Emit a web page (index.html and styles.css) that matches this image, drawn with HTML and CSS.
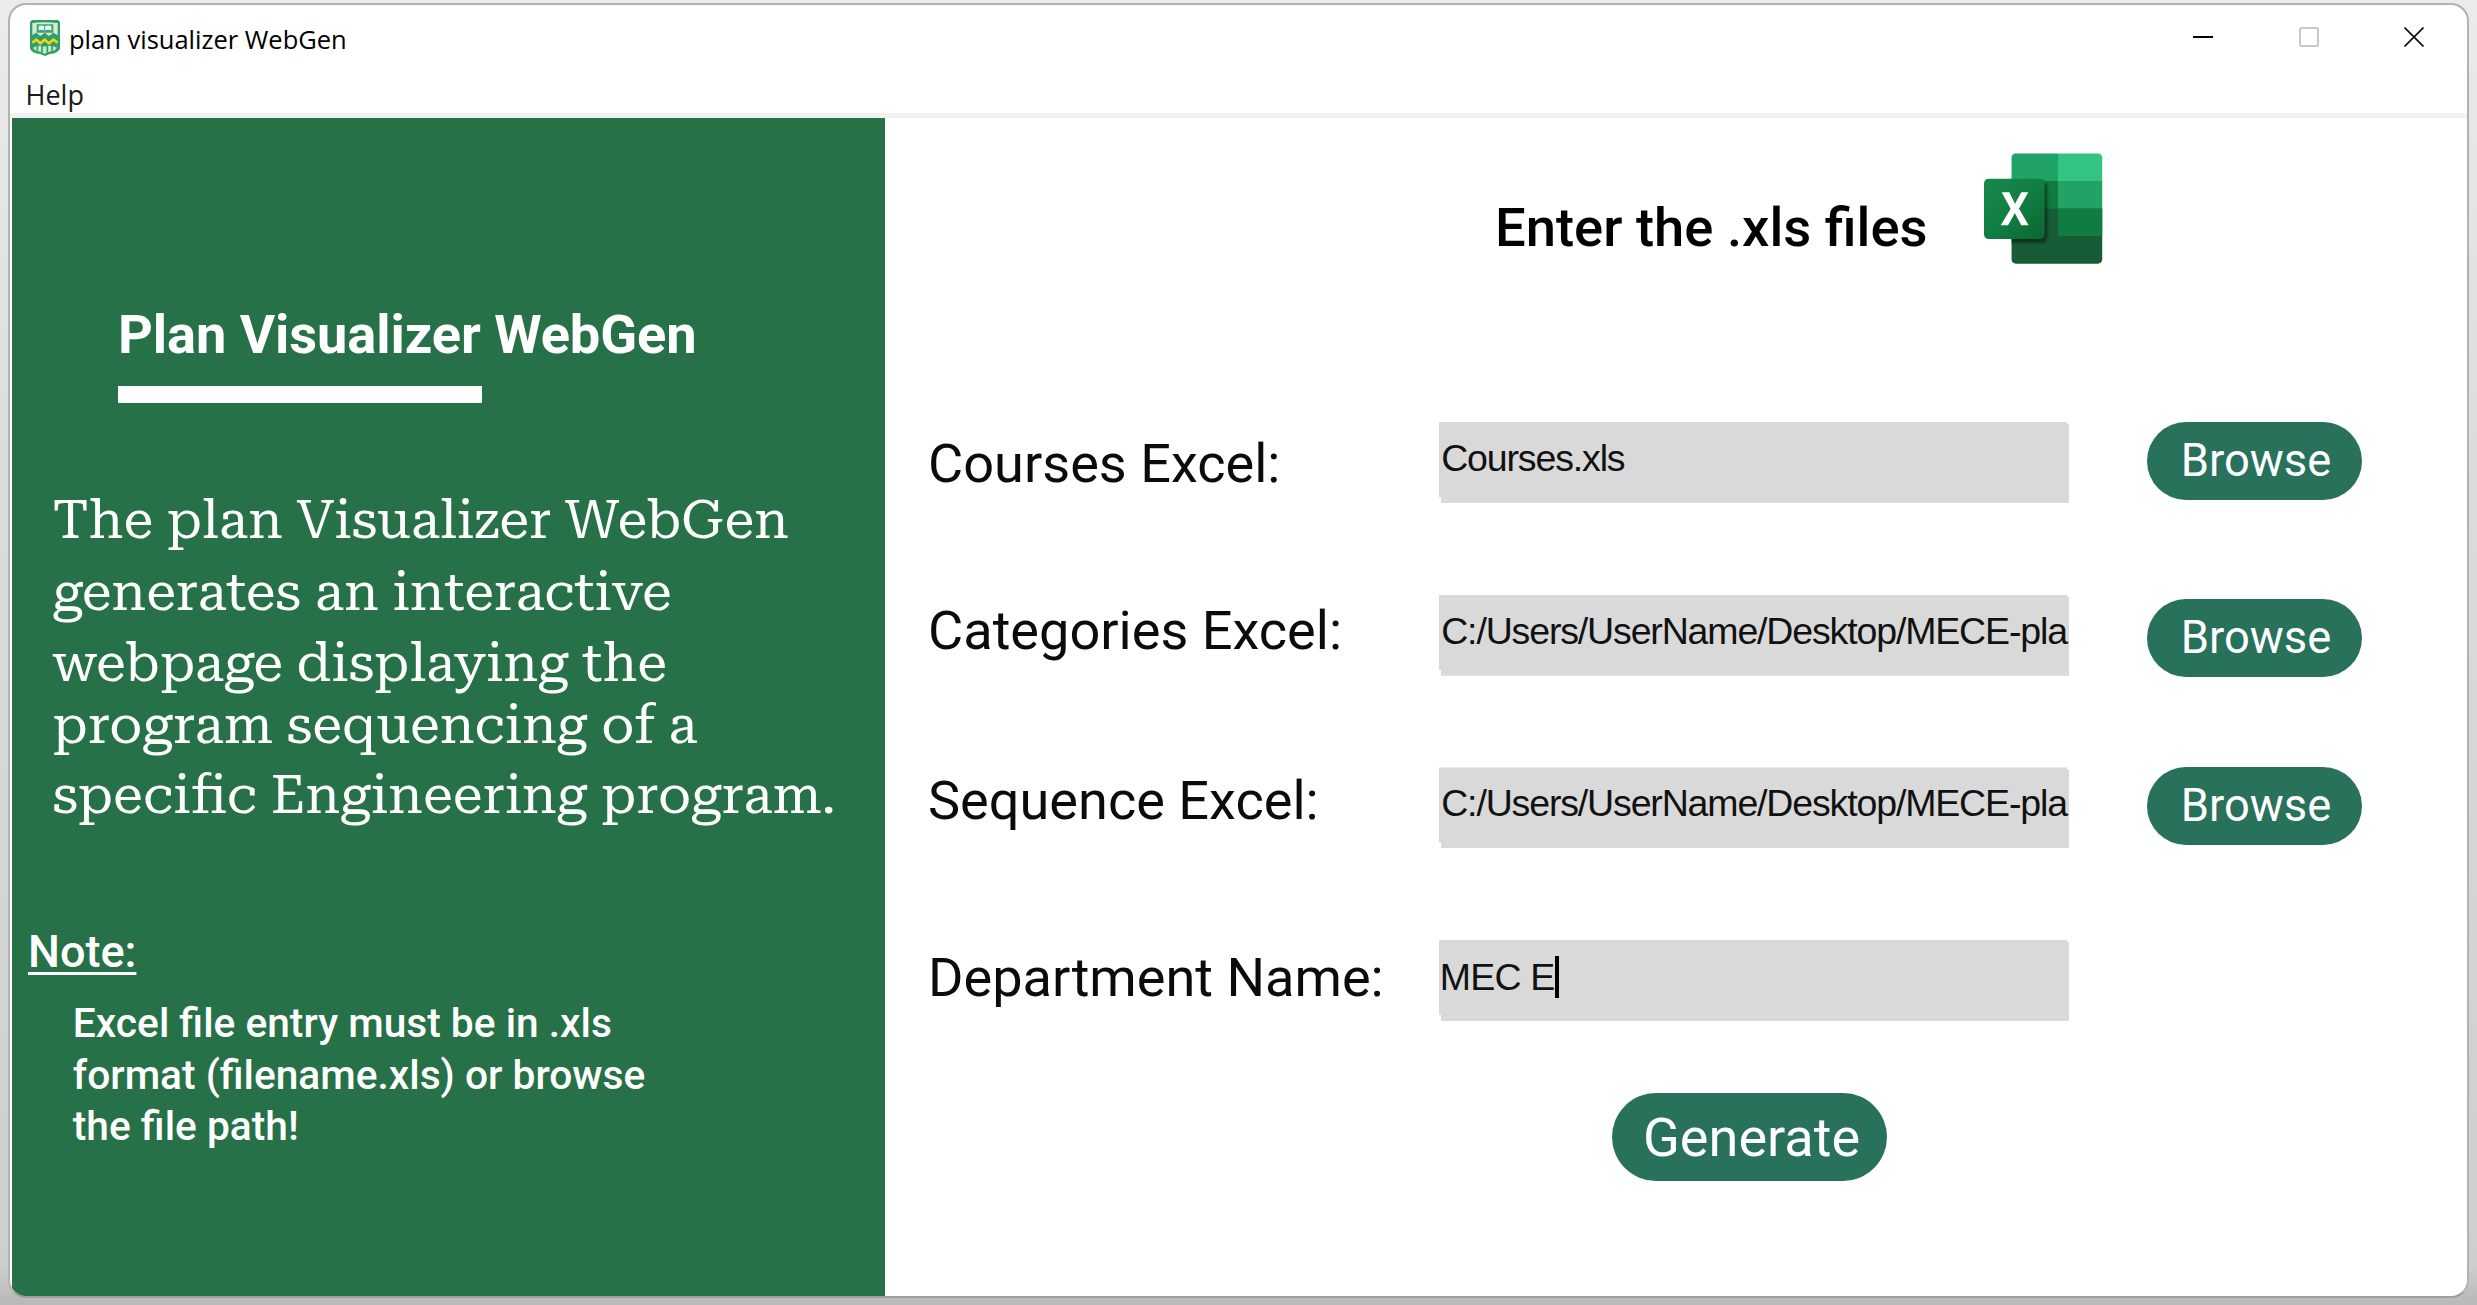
FILE: index.html
```
<!DOCTYPE html>
<html lang="en">
<head>
<meta charset="utf-8">
<title>plan visualizer WebGen</title>
<link rel="stylesheet" href="styles.css">
</head>
<body>
<div class="window">
  <header class="titlebar">
    <svg class="crest" viewBox="90 60 90 108" aria-hidden="true">
      <path d="M96 60H174L180 66V146Q172 160 150 162L135 168L120 162Q98 160 90 146V66Z" fill="#2f9e68"/>
      <path d="M97 69Q135 64 173 69V106L160 98L147 108L134 98L121 108L108 98L97 106Z" fill="#d9ecd0"/>
      <path d="M110 73H160V98H110Z" fill="#3ea37a"/>
      <path d="M116 78Q126 74 134 79Q143 74 154 78V91Q143 87 134 92Q126 87 116 91Z" fill="#e4f6f3"/>
      <path d="M134 79V92" stroke="#2f9e8a" stroke-width="3"/>
      <path d="M97 128L109 119L121 130L134 119L147 130L160 119L173 128" fill="none" stroke="#f2d31b" stroke-width="8"/>
      <path d="M99 143Q116 134 134 140Q152 134 171 143L164 151L148 155L134 161L120 155L105 151Z" fill="#c9e8c6"/>
      <path d="M112 137V152M126 138V158M142 138V158M156 137V152" stroke="#2f9e68" stroke-width="5"/>
    </svg>
    <span class="caption">plan visualizer WebGen</span>
    <div class="controls">
      <svg viewBox="0 0 20 20"><path d="M0 10H20" stroke="#000" stroke-width="2"/></svg>
      <svg viewBox="0 0 20 20"><rect x="1" y="1" width="18" height="18" rx="1.5" fill="none" stroke="#c8c8c8" stroke-width="2"/></svg>
      <svg viewBox="0 0 20 20"><path d="M.5 .5L19.5 19.5M19.5 .5L.5 19.5" stroke="#111" stroke-width="1.7"/></svg>
    </div>
  </header>
  <nav class="menubar"><span>Help</span></nav>
  <main class="content">
    <aside class="about">
      <h1 class="name">Plan Visualizer WebGen</h1>
      <div class="rule"></div>
      <p class="summary">
        <span>The plan Visualizer WebGen</span>
        <span>generates an interactive</span>
        <span>webpage displaying the</span>
        <span>program sequencing of a</span>
        <span>specific Engineering program.</span>
      </p>
      <h2 class="note-title">Note:</h2>
      <p class="note">Excel file entry must be in .xls<br>format (filename.xls) or browse<br>the file path!</p>
    </aside>
    <section class="form">
      <div class="form-head">
        <h2>Enter the .xls files</h2>
        <svg class="excel" viewBox="72 69 357 333" aria-hidden="true">
          <defs>
            <clipPath id="sheet"><rect x="154" y="70" width="273" height="331" rx="14"/></clipPath>
            <linearGradient id="tile" x1="0" y1="0" x2="1" y2="1"><stop offset="0" stop-color="#18884f"/><stop offset=".5" stop-color="#117e43"/><stop offset="1" stop-color="#0b6631"/></linearGradient>
            <filter id="soft" x="-20%" y="-20%" width="140%" height="140%"><feGaussianBlur stdDeviation="5"/></filter>
          </defs>
          <g clip-path="url(#sheet)">
            <rect x="154" y="70" width="140" height="84" fill="#21a366"/>
            <rect x="294" y="70" width="134" height="84" fill="#33c481"/>
            <rect x="154" y="153" width="140" height="84" fill="#107c41"/>
            <rect x="294" y="153" width="134" height="84" fill="#21a366"/>
            <rect x="154" y="236" width="274" height="166" fill="#185c37"/>
            <rect x="294" y="236" width="134" height="82" fill="#107c41"/>
            <rect x="80" y="156" width="182" height="182" rx="14" fill="#000" opacity=".45" filter="url(#soft)"/>
          </g>
          <rect x="72" y="146" width="182" height="181" rx="14" fill="url(#tile)"/>
          <path d="M122 286L152 236L125 187H148L162 215Q164 219 165 222Q167 218 169 214L184 187H205L177 236L206 286H184L167 254Q165 251 164 248Q163 251 162 254L144 286Z" fill="#fff"/>
        </svg>
      </div>
      <div class="rows">
        <label class="label l1">Courses Excel:</label>
        <div class="field">Courses.xls</div>
        <button class="browse">Browse</button>
        <label class="label l2">Categories Excel:</label>
        <div class="field">C:/Users/UserName/Desktop/MECE-pla</div>
        <button class="browse low">Browse</button>
        <label class="label l3">Sequence Excel:</label>
        <div class="field">C:/Users/UserName/Desktop/MECE-pla</div>
        <button class="browse">Browse</button>
        <label class="label l4">Department Name:</label>
        <div class="field dept">MEC E<i class="caret"></i></div>
      </div>
      <button class="generate">Generate</button>
    </section>
  </main>
</div>
</body>
</html>
```
FILE: styles.css
```
* { box-sizing: border-box; }
body {
  margin: 0;
  height: 1305px;
  padding: 3px 8px 7px 8px;
  overflow: hidden;
  background: linear-gradient(180deg, #ebebeb 0, #dcdcdc 35%, #cecece 97%, #bababa 99.6%);
  font-family: Roboto, "Liberation Sans", sans-serif;
}
h1, h2, p { margin: 0; }
button { border: 0; padding: 0; font-family: inherit; }
.window {
  width: 2461px;
  height: 1295px;
  border: 2px solid #b2b2b2;
  border-bottom-color: #9f9f9f;
  border-radius: 18px;
  background: #fff;
  overflow: hidden;
}
.titlebar {
  display: flex;
  align-items: center;
  height: 68px;
  padding: 0 43px 0 20px;
}
.crest { width: 30px; height: 36px; margin-top: -2px; }
.caption {
  margin: 0 0 1px 9px;
  font: 25.5px/36px "Open Sans", "Noto Sans", sans-serif;
  color: #000;
}
.controls {
  display: flex;
  gap: 85.5px;
  margin-left: auto;
  margin-top: -4px;
}
.controls svg { width: 20px; height: 20px; }
.menubar {
  height: 40px;
  padding-left: 15.5px;
  font: 27px/44px "Open Sans", "Noto Sans", sans-serif;
  color: #1a1a1a;
}
.content {
  display: flex;
  height: 1183px;
  padding-left: 2px;
  border-top: 5px solid #f1f1f1;
}
.about {
  display: flex;
  flex-direction: column;
  align-items: flex-start;
  width: 873px;
  padding-top: 186.6px;
  background: #277148;
  color: #fff;
}
.name {
  margin-left: 106px;
  font-size: 54.2px;
  line-height: 60px;
  font-weight: 700;
  letter-spacing: -.08px;
}
.rule {
  width: 364px;
  height: 17px;
  margin: 21.4px 0 0 106px;
  background: #fff;
}
.summary {
  display: flex;
  flex-direction: column;
  margin: 86.5px 0 0 40.4px;
  font-family: "Roboto Serif", "Noto Serif", "DejaVu Serif Condensed", serif;
  font-size: 54px;
  font-weight: 400;
  line-height: 62px;
  white-space: nowrap;
}
.summary span:nth-child(2) { margin-top: 10px; }
.summary span:nth-child(3) { margin-top: 9px; }
.summary span:nth-child(5) { margin-top: 7.5px; }
.note-title {
  margin: 100.5px 0 0 16px;
  font-size: 45px;
  line-height: 52px;
  font-weight: 500;
  text-decoration: underline;
  text-decoration-thickness: 2.5px;
  text-underline-offset: 5px;
  text-decoration-skip-ink: none;
}
.note {
  margin: 19.7px 0 0 60.8px;
  font-size: 40.7px;
  line-height: 51.4px;
  font-weight: 500;
}
.form {
  flex: 1;
  display: flex;
  flex-direction: column;
  align-items: flex-start;
  padding: 35px 0 0 43px;
}
.form-head {
  display: flex;
  align-items: flex-start;
  height: 111px;
  margin-left: 567px;
}
.form-head h2 {
  width: 489px;
  margin-top: 44.6px;
  font-size: 54.4px;
  line-height: 60px;
  font-weight: 500;
  color: #000;
}
.excel { width: 119px; height: 111px; }
.rows {
  display: grid;
  grid-template-columns: 511px 630px 293px;
  grid-template-rows: repeat(4, 81px);
  row-gap: 91.7px;
  margin-top: 158px;
  align-items: start;
}
.label {
  font-size: 54.1px;
  line-height: 60px;
  color: #0b0b0b;
  white-space: nowrap;
}
.l1 { margin-top: 11.5px; }
.l2 { margin-top: 6px; }
.l3 { margin-top: 3.3px; }
.l4 { margin-top: 7.7px; }
.field {
  display: flex;
  align-items: center;
  height: 81px;
  padding: 0 0 9px 2.2px;
  background: #d9d9d9;
  clip-path: polygon(0 0, 628px 0, 628px 2px, 100% 2px, 100% 100%, 2px 100%, 2px 75px, 0 75px);
  font: 37.5px/42px "Liberation Sans", Arial, sans-serif;
  letter-spacing: -1.15px;
  color: #111;
  white-space: nowrap;
  overflow: hidden;
}
.dept { padding: 0 0 7px .8px; letter-spacing: -.8px; }
.caret { width: 4px; height: 42px; background: #000; }
.browse, .generate {
  color: #fff;
  background: #28715a;
}
.browse {
  width: 215px;
  height: 78px;
  margin-left: 78px;
  padding-left: 3px;
  border-radius: 39px;
  font-size: 45.3px;
  line-height: 78px;
}
.low { margin-top: 4.3px; }
.generate {
  width: 275px;
  height: 88px;
  margin: 72px 0 0 683.6px;
  padding: 2px 0 0 5px;
  border-radius: 44px;
  font-size: 54.1px;
  line-height: 86px;
}
```
